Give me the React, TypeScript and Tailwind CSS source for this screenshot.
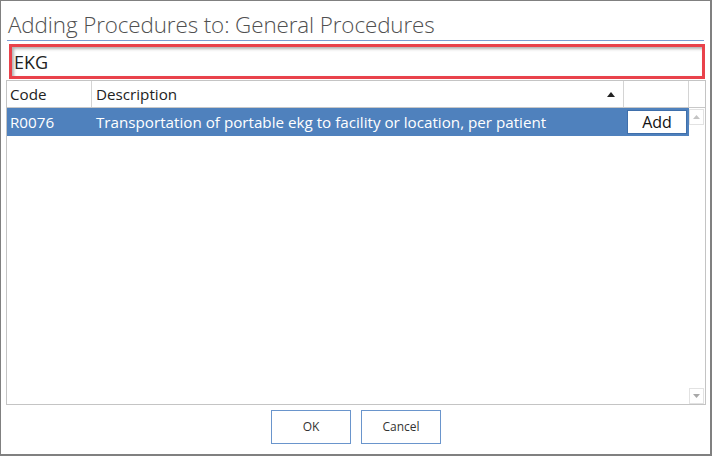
import React from "react";

export default function App() {
  const font = { fontFamily: '"Open Sans", "Noto Sans", sans-serif' };
  return (
    <div
      className="w-[712px] h-[456px] bg-white border-l border-t border-r-2 border-b-2 border-[#808080] flex flex-col text-[#222]"
      style={font}
    >
      <div className="mx-[6px] h-[40px] border-b border-[#7a9fd4] flex items-end pb-[4px] pl-[1px]">
        <span className="text-[22.4px] font-light text-[#505050] leading-none tracking-[-0.1px]">
          Adding Procedures to: General Procedures
        </span>
      </div>
      <div className="mt-[3px] ml-[8px] mr-[5px] h-[35px] border-[3px] border-[#e9424b] shadow-[inset_2px_2px_3px_rgba(0,0,0,0.3)] flex items-center pl-[2px]">
        <span className="text-[18px] leading-none">EKG</span>
      </div>
      <div className="mt-[1px] ml-[5px] mr-[4px] h-[325px] border border-[#c4c4c4] flex flex-col">
        <div className="grid grid-cols-[85px_532px_65px_17px] h-[27px] border-b border-[#c8c8c8]">
          <div className="border-r border-[#d4d4d4] flex items-center pl-[3px] text-[15.2px]">Code</div>
          <div className="border-r border-[#d4d4d4] flex items-center pl-[4px] text-[15.2px] justify-between pr-[8px]">
            <span>Description</span>
            <svg width="8" height="5" viewBox="0 0 8 5">
              <polygon points="0,5 8,5 4,0" fill="#222" />
            </svg>
          </div>
          <div className="border-r border-[#d4d4d4]" />
          <div />
        </div>
        <div className="flex flex-1">
          <div className="w-[682px] flex flex-col">
            <div className="h-[28px] bg-[#4f81bd] grid grid-cols-[85px_532px_65px] text-white text-[15.2px]">
              <div className="flex items-center pl-[3px]">R0076</div>
              <div className="flex items-center pl-[4px]">
                Transportation of portable ekg to facility or location, per patient
              </div>
              <div className="flex items-center pl-[3px] pr-[1px]">
                <div className="w-[60px] h-[24px] bg-white border border-[#3f6fab] text-[#111] text-[16px] flex items-center justify-center">
                  Add
                </div>
              </div>
            </div>
          </div>
          <div className="w-[17px] flex flex-col justify-between pt-[1px] pb-[0px]">
            <div className="w-[15px] h-[16px] border border-[#e2e2e2] flex items-center justify-center">
              <svg width="7" height="4" viewBox="0 0 7 4">
                <polygon points="0,4 7,4 3.5,0" fill="#c4c4c4" />
              </svg>
            </div>
            <div className="w-[15px] h-[16px] border border-[#e2e2e2] flex items-center justify-center">
              <svg width="7" height="4" viewBox="0 0 7 4">
                <polygon points="0,0 7,0 3.5,4" fill="#a8a8a8" />
              </svg>
            </div>
          </div>
        </div>
      </div>
      <div className="flex justify-center gap-[10px] pt-[5px] pl-[1px]">
        <button className="w-[80px] h-[34px] border border-[#6a95cc] bg-white text-[12px] text-[#333]">OK</button>
        <button className="w-[80px] h-[34px] border border-[#6a95cc] bg-white text-[12px] text-[#333]">Cancel</button>
      </div>
    </div>
  );
}
